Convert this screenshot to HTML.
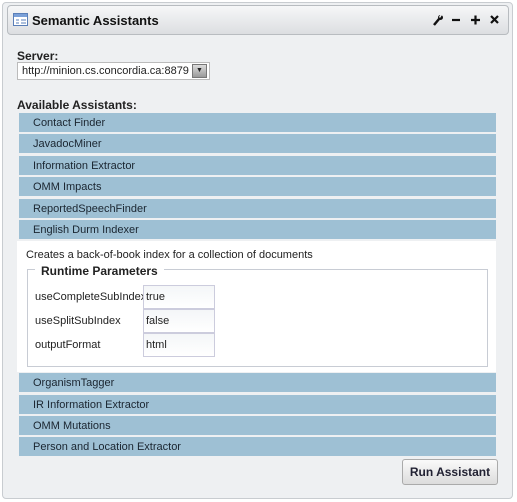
<html><head><style>
body{margin:0;width:517px;height:502px;background:#fff;font-family:"Liberation Sans",sans-serif;font-size:11px;color:#222;position:relative;overflow:hidden}
.a{position:absolute}
.outer{left:2px;top:2px;width:509px;height:495px;border:1px solid #c8ccd0;border-radius:4px;background:#eef0f2}
.title{left:7px;top:5px;width:500px;height:28px;border:1px solid #b8bcc0;border-radius:4px;background:linear-gradient(#f6f7f8,#dcdee1)}
.bar{left:19px;width:477px;height:19px;background:#9ec0d4;line-height:21px;text-indent:14px;color:#1a2530}
.in{left:143px;width:70px;height:22px;border:1px solid #ccd;background:linear-gradient(#f4f6f8,#fff);line-height:23px;text-indent:2px}
.lab{left:35px;line-height:23px}
</style></head><body>
<div class="a outer"></div>
<div class="a title"></div>
<svg class="a" style="left:13px;top:13px" width="16" height="14"><rect x=".5" y=".5" width="14" height="12" fill="#fff" stroke="#5a7fb8"/><rect x="1" y="1" width="13" height="3" fill="#7aa0d8"/><path d="M3 7h3M8 7h5M3 10h3M8 10h5" stroke="#5a7fb8"/></svg>
<div class="a" style="left:32px;top:13px;font-size:13px;font-weight:bold;color:#111">Semantic Assistants</div>
<svg class="a" style="left:432px;top:13px" width="68" height="14" stroke="#111" stroke-width="2.2" fill="none">
<path d="M2 12L7 6" stroke-width="2.5"/><circle cx="8.5" cy="4.5" r="2.5" fill="#111" stroke="none"/><path d="M9.5 1.5l-2 3" stroke="#f0f0f0" stroke-width="1.5"/>
<path d="M20 7h8"/><path d="M39 7h9M43.5 2.5v9"/><path d="M59 3l7 7M66 3l-7 7"/></svg>
<div class="a" style="left:17px;top:49px;font-size:12px;font-weight:bold">Server:</div>
<div class="a" style="left:17px;top:62px;width:191px;height:16px;border:1px solid #bbb;background:#fff"></div>
<div class="a" style="left:22px;top:65px;font-size:11px">http://minion.cs.concordia.ca:8879</div>
<div class="a" style="left:192px;top:64px;width:13px;height:12px;background:linear-gradient(#ddd,#999);border:1px solid #777;font-size:7px;text-align:center;line-height:12px">▼</div>
<div class="a" style="left:17px;top:98px;font-size:12px;font-weight:bold">Available Assistants:</div>
<div class="a bar" style="top:113px">Contact Finder</div>
<div class="a bar" style="top:134px">JavadocMiner</div>
<div class="a bar" style="top:156px">Information Extractor</div>
<div class="a bar" style="top:177px">OMM Impacts</div>
<div class="a bar" style="top:199px">ReportedSpeechFinder</div>
<div class="a bar" style="top:220px">English Durm Indexer</div>
<div class="a" style="left:17px;top:241px;width:479px;height:131px;background:#fff"></div>
<div class="a" style="left:26px;top:249px">Creates a back-of-book index for a collection of documents</div>
<div class="a" style="left:27px;top:269px;width:459px;height:96px;border:1px solid #c8ccd4"></div>
<div class="a" style="left:35px;top:264px;padding:0 6px;background:#fff;font-size:12px;font-weight:bold">Runtime Parameters</div>
<div class="a lab" style="top:286px">useCompleteSubIndex</div><div class="a in" style="top:285px">true</div>
<div class="a lab" style="top:310px">useSplitSubIndex</div><div class="a in" style="top:309px">false</div>
<div class="a lab" style="top:334px">outputFormat</div><div class="a in" style="top:333px">html</div>
<div class="a bar" style="top:373px">OrganismTagger</div>
<div class="a bar" style="top:395px">IR Information Extractor</div>
<div class="a bar" style="top:416px">OMM Mutations</div>
<div class="a bar" style="top:437px">Person and Location Extractor</div>
<div class="a" style="left:402px;top:459px;width:94px;height:24px;border:1px solid #aaa;border-radius:3px;background:linear-gradient(#fafafa,#dcdcdc);text-align:center;line-height:25px;font-weight:bold;font-size:12px;color:#223">Run Assistant</div>
</body></html>
